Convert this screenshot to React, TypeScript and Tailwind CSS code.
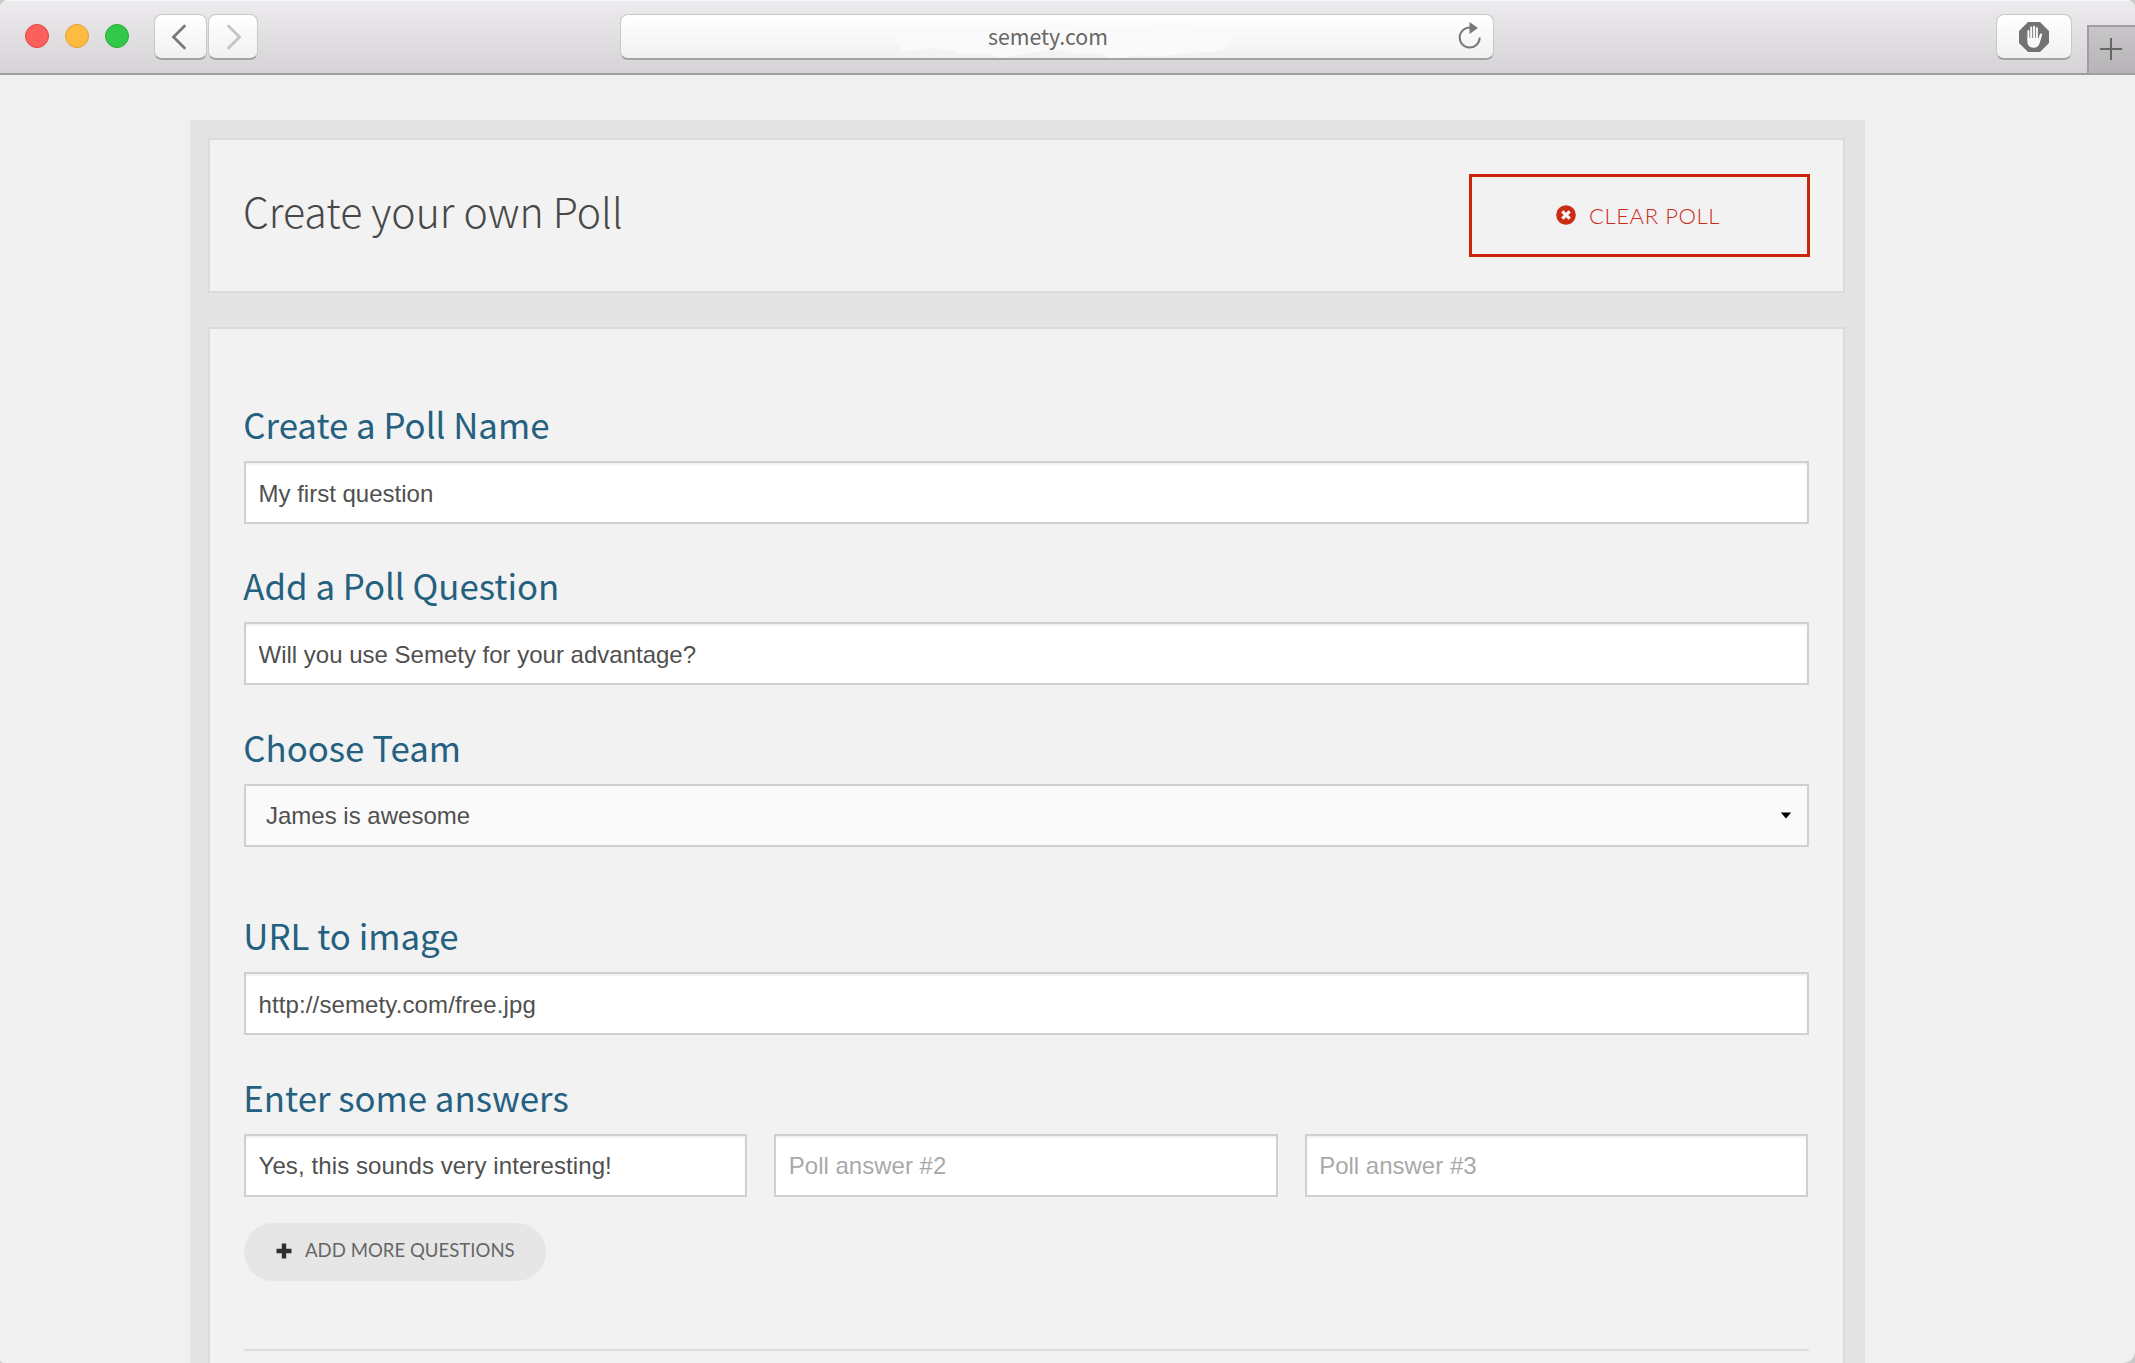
import React from "react";

const keycap =
  "border border-[#c9c7ca] border-b-2 border-b-[#a3a1a4] bg-linear-to-b from-white to-[#f1f1f1]";

function TrafficLights() {
  return (
    <div className="mb-[2px] flex gap-4">
      <span className="size-6 rounded-full border border-[#e0443e] bg-[#fc605c]" />
      <span className="size-6 rounded-full border border-[#dea034] bg-[#fdbc40]" />
      <span className="size-6 rounded-full border border-[#27aa35] bg-[#34c84a]" />
    </div>
  );
}

function StopHandIcon() {
  return (
    <svg width="30" height="30" viewBox="0 0 30 30">
      <path d="M9 0H21L30 9V21L21 30H9L0 21V9Z" fill="#737373" />
      <g stroke="#fafafa" strokeWidth="2" strokeLinecap="round">
        <path d="M9.4 9V18" />
        <path d="M12.2 5.6V18" />
        <path d="M15.1 4.8V18" />
        <path d="M17.9 6.2V18" />
      </g>
      <path
        d="M8.4 16H18.9V17.5L20.9 12.3C21.5 11 23.5 11.6 23.1 13L20.6 21.2C19.6 24.2 17.5 25.8 14.6 25.8C10.8 25.8 8.4 23.6 8.4 19.6Z"
        fill="#fafafa"
      />
    </svg>
  );
}

function Toolbar() {
  return (
    <header className="flex h-[75px] shrink-0 border-t border-b-2 border-t-[#f6f5f7] border-b-[#9f9da0] bg-linear-to-b from-[#edebee] to-[#d5d3d6] pl-[25px]">
      <div className="flex w-[595px] items-center">
        <TrafficLights />
        <div className="ml-[25px] flex gap-px">
          <button className={`flex h-[46px] w-[53px] items-center justify-center rounded-[8px] pr-[3px] ${keycap}`}>
            <svg width="16" height="26" viewBox="0 0 16 26" fill="none" stroke="#7a7a7a" strokeWidth="2.8" strokeLinecap="round">
              <path d="M13.5 2L2.5 13L13.5 24" />
            </svg>
          </button>
          <button className={`flex h-[46px] w-[50px] items-center justify-center rounded-[8px] pl-[2px] ${keycap}`}>
            <svg width="16" height="26" viewBox="0 0 16 26" fill="none" stroke="#c4c4c4" strokeWidth="2.8" strokeLinecap="round">
              <path d="M2.5 2L13.5 13L2.5 24" />
            </svg>
          </button>
        </div>
      </div>
      <div className={`mt-[13px] flex h-[46px] w-[874px] items-center rounded-[8px] pr-[11px] ${keycap}`}>
        <div className="relative flex h-full flex-1 items-center justify-center pl-[17px]">
          <svg className="absolute top-[11px] left-[272px]" width="340" height="33" viewBox="0 0 340 33">
            <path
              d="M2 1L60 2L120 3L165 0L210 3L280 0L330 2C340 6 340 18 330 24C318 28 300 25 285 28C262 33 240 26 232 32L215 32C205 24 190 28 180 27C168 22 150 25 140 26C125 28 115 33 104 31C98 26 84 27 66 28C60 24 52 24 42 22C30 22 20 26 10 25C6 18 0 12 2 1Z"
              fill="#fafafa"
            />
          </svg>
          <span className="relative -mt-[2px] font-['Noto_Sans_CJK_SC','Noto_Sans_CJK_JP',sans-serif] text-[21.3px] leading-8 text-[#666]">
            semety.com
          </span>
        </div>
        <svg className="-mt-px" width="24" height="28" viewBox="0 0 24 28">
          <path d="M12.5 5.6A10 10 0 1 0 21.7 15.6" fill="none" stroke="#777" strokeWidth="2" />
          <path d="M11.5 0L20 6L11.5 12Z" fill="#777" />
        </svg>
      </div>
      <div className={`mt-[13px] ml-[502px] flex h-[46px] w-[76px] items-center justify-center rounded-[8px] ${keycap}`}>
        <StopHandIcon />
      </div>
      <div className="mt-6 ml-auto flex w-12 items-center justify-center border-t-2 border-l-2 border-[#9f9da0] bg-linear-to-b from-[#c7c5c8] to-[#b6b4b7] pr-[2px] pb-[2px]">
        <svg width="22" height="22" viewBox="0 0 22 22" stroke="#666" strokeWidth="2">
          <path d="M11 0V22M0 11H22" />
        </svg>
      </div>
    </header>
  );
}

function TextBox({
  value,
  placeholder,
  tracking = "",
}: {
  value?: string;
  placeholder?: string;
  tracking?: string;
}) {
  return (
    <input
      defaultValue={value}
      placeholder={placeholder}
      className={`block h-[63px] w-full min-w-0 border-2 border-[#d0d0d0] bg-white px-[12.5px] pt-[2px] font-['Liberation_Sans',Arial,sans-serif] text-2xl text-[#505050] shadow-[inset_0_2px_2px_rgba(0,0,0,0.06)] outline-none placeholder:text-[#a9a9a9] placeholder:opacity-100 ${tracking}`}
    />
  );
}

function Field({ label, children }: { label: string; children: React.ReactNode }) {
  return (
    <section>
      <h2 className="mb-[17px] -ml-[0.7px] font-['Noto_Sans_CJK_SC','Noto_Sans_CJK_JP',sans-serif] text-[34.8px] leading-10 text-[#24607f]">
        {label}
      </h2>
      {children}
    </section>
  );
}

export default function App() {
  return (
    <div className="h-[1363px] w-[2135px] bg-[#c9c8ca]">
      <div className="flex h-full flex-col overflow-hidden rounded-t-[8px] rounded-br-[12px] rounded-bl-[4px] bg-[#f0f0f0]">
        <Toolbar />
        <main className="mt-[45px] ml-[190px] flex w-[1675px] flex-1 flex-col bg-[#e4e4e4] pt-[18px] pr-5 pl-[18px]">
          <div className="flex h-[155px] justify-between border-2 border-[#dbdbdb] bg-[#f2f2f2] pt-[34px] pr-[33px] pl-[33px]">
            <h1 className="mt-2 font-['Noto_Sans_CJK_SC','Noto_Sans_CJK_JP',sans-serif] text-[41px] leading-[56px] font-light text-[#484848]">
              Create your own Poll
            </h1>
            <button className="flex h-[83px] w-[341px] items-center justify-center gap-[13px] border-[3px] border-[#ca2507] pr-[3px] pb-px font-['Lato',sans-serif] text-[22px] font-light tracking-[0.6px] text-[#cc2a1c]">
              <svg width="20" height="20" viewBox="0 0 20 20">
                <circle cx="10" cy="10" r="9.8" fill="#ca2c14" />
                <path d="M6.3 6.3L13.7 13.7M13.7 6.3L6.3 13.7" stroke="#f5f5f5" strokeWidth="3.2" />
              </svg>
              CLEAR POLL
            </button>
          </div>

          <div className="mt-[34px] flex flex-1 flex-col border-2 border-b-0 border-[#dbdbdb] bg-[#f2f2f2] px-[34px] pt-[75px]">
            <div className="flex flex-col gap-[41.3px]">
              <Field label="Create a Poll Name">
                <TextBox value="My first question" />
              </Field>
              <Field label="Add a Poll Question">
                <TextBox value="Will you use Semety for your advantage?" />
              </Field>
              <Field label="Choose Team">
                <div className="flex h-[63px] items-center justify-between border-2 border-[#d0d0d0] bg-[#fafafa] pt-[2px] pr-[15px] pl-5 font-['Liberation_Sans',Arial,sans-serif] text-2xl text-[#505050]">
                  James is awesome
                  <svg className="-mt-[2px]" width="12" height="7" viewBox="0 0 12 7">
                    <path d="M0.8 0.5H11.2L6 6.5Z" fill="#000" />
                  </svg>
                </div>
              </Field>
              <div className="mt-[27.5px]">
                <Field label="URL to image">
                  <TextBox value="http://semety.com/free.jpg" tracking="tracking-[0.12px]" />
                </Field>
              </div>
              <Field label="Enter some answers">
                <div className="grid grid-cols-3 gap-[27px] pr-px">
                  <TextBox value="Yes, this sounds very interesting!" tracking="tracking-[0.1px]" />
                  <TextBox placeholder="Poll answer #2" />
                  <TextBox placeholder="Poll answer #3" />
                </div>
              </Field>
            </div>
            <button className="mt-[26px] flex h-[58px] w-[302px] items-center gap-[13px] rounded-full bg-[#e6e6e6] pb-[2px] pl-8 font-['Lato',sans-serif] text-[18.6px] text-[#666]">
              <svg width="16" height="16" viewBox="0 0 16 16" stroke="#2e2e2e" strokeWidth="4.4">
                <path d="M8 0.5V15.5M0.5 8H15.5" />
              </svg>
              ADD MORE QUESTIONS
            </button>
            <hr className="mt-[68px] border-t-2 border-[#dedede]" />
          </div>
        </main>
      </div>
    </div>
  );
}
